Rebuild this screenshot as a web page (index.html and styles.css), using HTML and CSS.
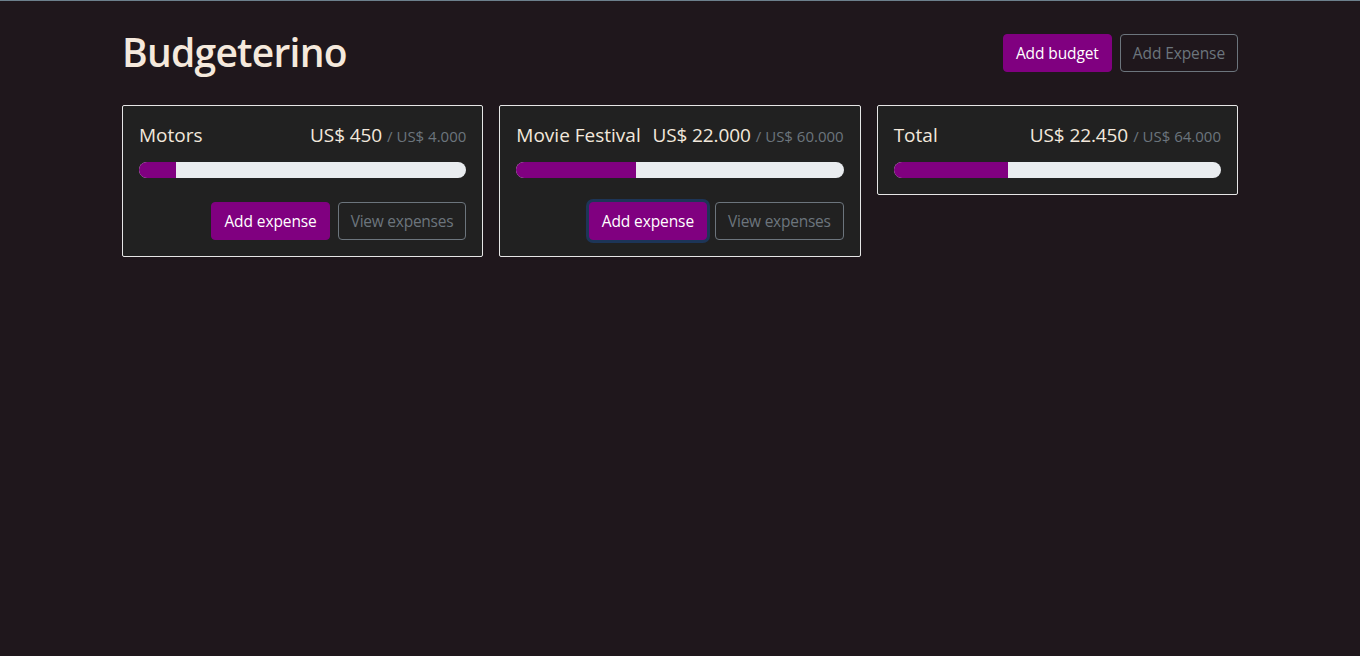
FILE: index.html
```html
<!DOCTYPE html>
<html lang="en">
<head>
<meta charset="utf-8">
<title>Budgeterino</title>
<link rel="stylesheet" href="styles.css">
</head>
<body>
<div class="topline"></div>
<main class="container">
  <header class="header">
    <h1 class="title">Budgeterino</h1>
    <div class="actions">
      <button class="btn btn-primary">Add budget</button>
      <button class="btn btn-outline">Add Expense</button>
    </div>
  </header>
  <section class="grid">
    <div class="card">
      <div class="card-head">
        <h2 class="card-title">Motors</h2>
        <div class="amount">US$ 450<span class="max">/ US$ 4.000</span></div>
      </div>
      <div class="progress"><div class="bar" style="width: 11.25%"></div></div>
      <div class="card-actions">
        <button class="btn btn-primary">Add expense</button>
        <button class="btn btn-outline btn-view">View expenses</button>
      </div>
    </div>
    <div class="card">
      <div class="card-head">
        <h2 class="card-title">Movie Festival</h2>
        <div class="amount">US$ 22.000<span class="max">/ US$ 60.000</span></div>
      </div>
      <div class="progress"><div class="bar" style="width: 36.67%"></div></div>
      <div class="card-actions">
        <button class="btn btn-primary focused">Add expense</button>
        <button class="btn btn-outline btn-view">View expenses</button>
      </div>
    </div>
    <div class="card">
      <div class="card-head">
        <h2 class="card-title">Total</h2>
        <div class="amount">US$ 22.450<span class="max">/ US$ 64.000</span></div>
      </div>
      <div class="progress"><div class="bar" style="width: 35.08%"></div></div>
    </div>
  </section>
</main>
</body>
</html>
```

FILE: styles.css
```css
* { box-sizing: border-box; }
html, body { margin: 0; padding: 0; }
body {
  background: #1f171c;
  color: #f2e8dc;
  font-family: "Open Sans", "Noto Sans", sans-serif;
  font-size: 16px;
  line-height: 1.5;
  height: 656px;
}
.topline { height: 1px; background: #6c808c; }
.container {
  width: 1140px;
  margin: 0 auto;
  padding: 0 12px;
}
.header {
  display: flex;
  justify-content: space-between;
  align-items: flex-start;
  padding-top: 27px;
  height: 104px;
}
.title {
  margin: 0;
  font-size: 39px;
  font-weight: 600;
  line-height: 48px;
  color: #f5e9dc;
  letter-spacing: -0.75px;
}
.actions { display: flex; gap: 8px; padding-top: 6px; }
.btn {
  font-family: inherit;
  font-size: 15.5px;
  line-height: 24px;
  padding: 6px 12px;
  border-radius: 4px;
  border: 1px solid transparent;
  background: transparent;
  cursor: pointer;
  letter-spacing: -0.1px;
}
.btn-view { letter-spacing: -0.25px; }
.btn-primary { background: #800080; border-color: #800080; color: #fff; }
.btn-outline { border-color: #6c757d; color: #6c757d; }
.focused { box-shadow: 0 0 0 3px #1d3557; }
.grid {
  display: grid;
  grid-template-columns: repeat(3, minmax(0, 1fr));
  gap: 16px;
  align-items: start;
}
.card {
  background: #212121;
  border: 1px solid #e6e6e6;
  border-radius: 2px;
  padding: 16px;
}
.card-head {
  display: flex;
  justify-content: space-between;
  align-items: baseline;
  gap: 10px;
  height: 24px;
  margin-bottom: 16px;
  padding-top: 1px;
}
.card-title {
  margin: 0;
  font-size: 19px;
  font-weight: 400;
  line-height: 24px;
  color: #f2e8dc;
  white-space: nowrap;
}
.amount {
  font-size: 19px;
  line-height: 24px;
  white-space: nowrap;
  color: #f2e8dc;
  letter-spacing: -0.1px;
}
.max {
  font-size: 15px;
  line-height: 16px;
  color: #6c757d;
  margin-left: 5px;
  letter-spacing: 0;
}
.progress {
  height: 16px;
  background: #e9ecef;
  border-radius: 8px;
  overflow: hidden;
}
.bar { height: 100%; background: #800080; }
.card-actions {
  display: flex;
  justify-content: flex-end;
  gap: 8px;
  margin-top: 24px;
}
```
